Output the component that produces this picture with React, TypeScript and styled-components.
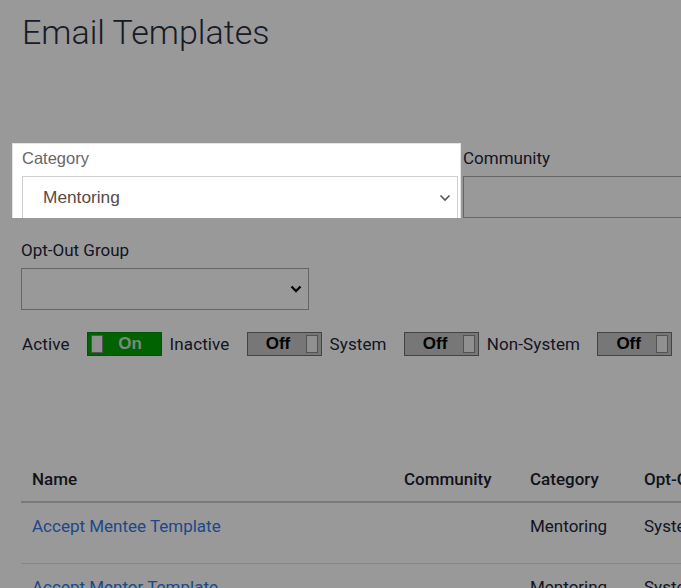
import React from "react";
import styled, { createGlobalStyle } from "styled-components";

const GlobalStyle = createGlobalStyle`
  html, body {
    margin: 0;
    padding: 0;
    overflow: hidden;
    background: #ffffff;
  }
  body {
    font-family: Roboto, "Noto Sans", sans-serif;
    color: #2b2d42;
  }
`;

interface ToggleProps {
  $on: boolean;
}

const columns = "372px 126px 114px 220px";

const rows = [
  { name: "Accept Mentee Template", community: "", category: "Mentoring", optOut: "System" },
  { name: "Accept Mentor Template", community: "", category: "Mentoring", optOut: "System" },
];

const toggles = [
  { label: "Active", on: true },
  { label: "Inactive", on: false },
  { label: "System", on: false },
  { label: "Non-System", on: false },
];

const Chevron: React.FC<{ color: string; weight: number }> = ({ color, weight }) => (
  <svg width="12" height="8" viewBox="0 0 12 8">
    <path d="M1.5 1.5 L6 6 L10.5 1.5" fill="none" stroke={color} strokeWidth={weight} />
  </svg>
);

const App: React.FC = () => {
  return (
    <Page>
      <GlobalStyle />
      <Title>Email Templates</Title>

      <FilterRow>
        <HighlightField>
          <HighlightLabel>Category</HighlightLabel>
          <HighlightSelect>
            <span>Mentoring</span>
            <Chevron color="#555" weight={1.6} />
          </HighlightSelect>
        </HighlightField>
        <Field>
          <Label>Community</Label>
          <Select $width="400px" />
        </Field>
      </FilterRow>

      <OptOutField>
        <Label>Opt-Out Group</Label>
        <Select $width="288px">
          <span />
          <Chevron color="#111" weight={2.4} />
        </Select>
      </OptOutField>

      <ToggleRow>
        {toggles.map((t) => (
          <ToggleItem key={t.label}>
            <ToggleLabel>{t.label}</ToggleLabel>
            <Toggle $on={t.on}>
              {t.on && <Knob />}
              <ToggleText $on={t.on}>{t.on ? "On" : "Off"}</ToggleText>
              {!t.on && <Knob />}
            </Toggle>
          </ToggleItem>
        ))}
      </ToggleRow>

      <Table>
        <HeaderRow>
          <HeadCell>Name</HeadCell>
          <HeadCell>Community</HeadCell>
          <HeadCell>Category</HeadCell>
          <HeadCell>Opt-Out Group</HeadCell>
        </HeaderRow>
        {rows.map((r) => (
          <BodyRow key={r.name}>
            <Cell>
              <Link href="#">{r.name}</Link>
            </Cell>
            <Cell>{r.community}</Cell>
            <Cell>{r.category}</Cell>
            <Cell>{r.optOut}</Cell>
          </BodyRow>
        ))}
      </Table>

      <Overlay />
    </Page>
  );
};

const Page = styled.div`
  position: relative;
  width: 900px;
  min-height: 700px;
  padding: 0 0 40px 0;
`;

const Title = styled.h1`
  margin: 0;
  padding: 10px 0 0 22px;
  font-size: 34px;
  font-weight: 300;
  line-height: 44px;
  color: #2b2d42;
`;

const FilterRow = styled.div`
  display: flex;
  align-items: flex-start;
  gap: 2px;
  margin: 89px 0 0 12px;
`;

const HighlightField = styled.div`
  position: relative;
  z-index: 2;
  display: flex;
  flex-direction: column;
  width: 436px;
  padding: 4px 2px 0 9px;
  background: #ffffff;
  border: 1px solid #e4e4e4;
  border-bottom: none;
`;

const HighlightLabel = styled.div`
  font-family: "Liberation Sans", Arial, sans-serif;
  font-size: 16.5px;
  line-height: 20px;
  color: #6a6664;
  margin-bottom: 8px;
`;

const HighlightSelect = styled.div`
  display: flex;
  align-items: center;
  justify-content: space-between;
  box-sizing: border-box;
  height: 42px;
  padding: 0 6px 0 20px;
  border: 1px solid #cfcfcf;
  border-bottom: none;
  font-family: "Liberation Sans", Arial, sans-serif;
  font-size: 17.3px;
  color: #574a46;
`;

const Field = styled.div`
  display: flex;
  flex-direction: column;
  padding-top: 5px;
`;

const OptOutField = styled(Field)`
  margin: 17px 0 0 21px;
`;

const Label = styled.div`
  font-size: 17px;
  font-weight: 400;
  line-height: 20px;
  color: #23253a;
  margin-bottom: 8px;
`;

const Select = styled.div<{ $width: string }>`
  display: flex;
  align-items: center;
  justify-content: space-between;
  box-sizing: border-box;
  width: ${({ $width }) => $width};
  height: 42px;
  padding: 0 6px 0 12px;
  border: 1px solid #a9a9a9;
  background: #ffffff;
`;

const ToggleRow = styled.div`
  display: flex;
  align-items: center;
  gap: 8px;
  margin: 22px 0 0 22px;
`;

const ToggleItem = styled.div`
  display: flex;
  align-items: center;
  gap: 17px;
`;

const ToggleLabel = styled.span`
  font-size: 17px;
  font-weight: 400;
  letter-spacing: 0.12px;
  color: #23253a;
`;

const Toggle = styled.div<ToggleProps>`
  display: flex;
  align-items: center;
  justify-content: space-between;
  box-sizing: border-box;
  width: 75px;
  height: 24px;
  padding: 2px 3px;
  background: ${({ $on }) => ($on ? "#00a300" : "#c7c7c7")};
  border: 1px solid ${({ $on }) => ($on ? "#008a00" : "#707070")};
`;

const Knob = styled.div`
  box-sizing: border-box;
  width: 12px;
  height: 18px;
  background: #f0f0f0;
  border: 1px solid #8a8a8a;
`;

const ToggleText = styled.span<ToggleProps>`
  flex: 1;
  text-align: center;
  font-family: "Liberation Sans", Arial, sans-serif;
  font-size: 17px;
  font-weight: 700;
  color: ${({ $on }) => ($on ? "#cfe3cf" : "#000000")};
`;

const Table = styled.div`
  margin: 102px 0 0 21px;
`;

const HeaderRow = styled.div`
  display: grid;
  grid-template-columns: ${columns};
  border-bottom: 2px solid #cbcbcb;
`;

const BodyRow = styled.div`
  display: grid;
  grid-template-columns: ${columns};
  border-bottom: 1px solid #e2e2e2;
`;

const HeadCell = styled.div`
  padding: 11px 11px 12px;
  font-size: 17px;
  font-weight: 500;
  line-height: 20px;
  color: #1d1f30;
  white-space: nowrap;
`;

const Cell = styled.div`
  padding: 13px 11px 27px;
  font-size: 17px;
  line-height: 20px;
  color: #23253a;
  white-space: nowrap;
`;

const Link = styled.a`
  color: #3278e6;
  text-decoration: none;
`;

const Overlay = styled.div`
  position: absolute;
  inset: 0;
  z-index: 1;
  background: rgba(0, 0, 0, 0.4);
`;

export default App;
